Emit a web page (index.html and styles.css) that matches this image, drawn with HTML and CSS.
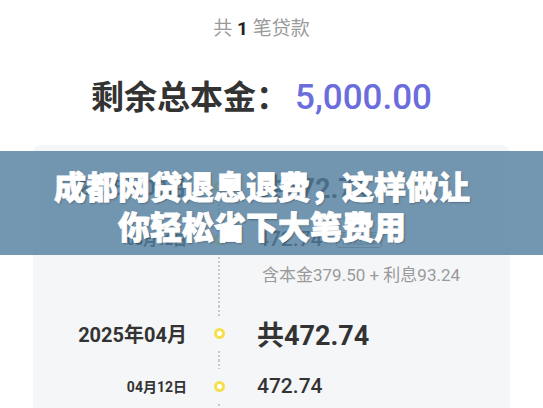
FILE: index.html
```html
<!DOCTYPE html>
<html>

<head>
	<meta charset="utf-8">
	<meta name="viewport" content="width=device-width, initial-scale=1">
	<title>成都网贷退息退费</title>
	<link rel="stylesheet" href="styles.css">
</head>

<body>
	<div class="summary">
		<p class="count">共 <b>1</b> 笔贷款</p>
		<h1 class="total">剩余总本金：<span class="money">5,000.00</span></h1>
	</div>

	<div class="plan">
		<div class="row month first">
			<div class="date">2025年03月</div>
			<div class="rail"><i class="seg"></i><i class="dot"></i><i class="seg"></i></div>
			<div class="amount">共472.74</div>
		</div>
		<div class="row day">
			<div class="date">03月12日</div>
			<div class="rail"><i class="seg"></i><i class="dot"></i><i class="seg"></i></div>
			<div class="amount">472.74 <span class="tag">待还款</span></div>
		</div>
		<div class="row detail">
			<div class="date"></div>
			<div class="rail"><i class="seg"></i></div>
			<div class="amount">含本金379.50 + 利息93.24</div>
		</div>
		<div class="row month">
			<div class="date">2025年04月</div>
			<div class="rail"><i class="seg"></i><i class="dot"></i><i class="seg"></i></div>
			<div class="amount">共472.74</div>
		</div>
		<div class="row day">
			<div class="date">04月12日</div>
			<div class="rail"><i class="seg"></i><i class="dot"></i><i class="seg"></i></div>
			<div class="amount">472.74</div>
		</div>
	</div>

	<!-- title banner laid over the screenshot -->
	<div class="banner">
		成都网贷退息退费，这样做让<br>你轻松省下大笔费用
	</div>
</body>

</html>
```

FILE: styles.css
```css
html,
body {
	height: 100%;
	overflow: hidden;
}

body {
	margin: 0;
	position: relative;
	background-color: #FFFFFF;
	color: #333333;
	font-family: Roboto, "Noto Sans CJK SC", sans-serif;
}

.summary {
	padding: 17px 20px 0 0;
	text-align: center;
}

.count {
	margin: 0;
	font-size: 19px;
	line-height: 24px;
	color: #9A9A9A;
}

.count b {
	color: #222222;
}

.total {
	margin: 37px 0 0;
	font-size: 33px;
	line-height: 40px;
	font-weight: 700;
	color: #333333;
}

.money {
	margin-left: 6px;
	font-size: 35px;
	font-weight: 500;
	color: #6A6DDB;
}

.plan {
	margin: 27px 33px 0;
	padding-top: 14px;
	background-color: #F5F6F8;
	border-radius: 8px 8px 0 0;
	min-height: 300px;
}

.row {
	display: grid;
	grid-template-columns: 154px 64px 1fr;
	align-items: center;
}

.month {
	height: 54px;
}

.day {
	height: 52px;
}

.detail {
	height: 41px;
	align-items: start;
}

.date {
	text-align: right;
	font-weight: 700;
	color: #333333;
}

.month .date {
	font-size: 20px;
}

.day .date {
	font-size: 14px;
}

.rail {
	align-self: stretch;
	display: flex;
	flex-direction: column;
	align-items: center;
}

.seg {
	flex: 1;
	width: 2px;
	background: repeating-linear-gradient(#C9C9C9 0 2px, transparent 2px 4px);
}

.first .seg:first-child {
	visibility: hidden;
}

.dot {
	width: 11px;
	height: 11px;
	margin: 12px 0;
	box-sizing: border-box;
	border: 3px solid #F4E04E;
	border-radius: 50%;
	background-color: #FFFFFF;
}

.amount {
	padding-left: 6px;
	color: #333333;
}

.month .amount {
	font-size: 27px;
	font-weight: 700;
}

.day .amount {
	font-size: 21px;
	font-weight: 500;
}

.detail .amount {
	padding-left: 11px;
	font-size: 17px;
	line-height: 20px;
	color: #9A9A9A;
}

.tag {
	margin-left: 8px;
	padding: 0 4px;
	border: 1px solid #A8A8A8;
	border-radius: 3px;
	font-size: 12px;
	line-height: 12px;
	color: #A0A0A0;
	vertical-align: middle;
}

.banner {
	position: absolute;
	top: 151px;
	left: 0;
	right: 0;
	height: 104px;
	box-sizing: border-box;
	padding: 14px 19px 0 0;
	background-color: rgba(81, 125, 157, 0.8);
	text-align: center;
	color: #FFFFFF;
	font-family: "Noto Sans CJK SC", sans-serif;
	font-size: 32px;
	line-height: 40px;
	font-weight: 900;
	-webkit-text-stroke: 0.8px #FFFFFF;
	text-shadow: 1px 1px 2px rgba(0, 0, 0, 0.35);
}
```
